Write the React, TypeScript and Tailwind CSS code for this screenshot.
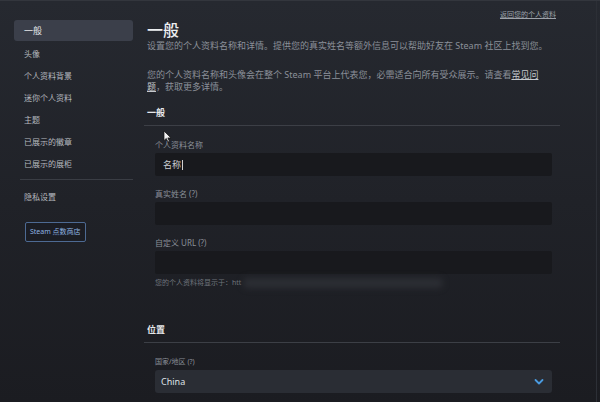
import React from 'react';

const font = { fontFamily: '"Noto Sans", "Noto Sans CJK SC", sans-serif' };

const navItems = ['头像', '个人资料背景', '迷你个人资料', '主题', '已展示的徽章', '已展示的展柜'];

function Field({ label, value, cursor }: { label: string; value?: string; cursor?: boolean }) {
  return (
    <div className="flex flex-col">
      <div className="text-[8px] text-[#8a8f98] h-[12px] leading-[12px] mb-[2px]">{label}</div>
      <div className="h-[23px] bg-[#18191d] rounded-[2px] flex items-center px-[8px] text-[9px] text-[#c9ccd1]">
        {value}
        {cursor && <span className="w-px h-[10px] bg-[#d0d0d0] ml-px" />}
      </div>
    </div>
  );
}

export default function App() {
  return (
    <div
      className="w-[600px] h-[402px] overflow-hidden relative flex bg-gradient-to-b from-[#262930] via-[#202228] to-[#1b1c21] border-t border-[#33363d]"
      style={font}
    >
      {/* sidebar */}
      <div className="w-[147px] shrink-0 pt-[19px] pl-[14px] pr-[14px] flex flex-col">
        <div className="h-[21px] rounded-[3px] bg-[#3b3f4a] flex items-center pl-[10px] text-[9px] text-[#e6e8eb]">一般</div>
        <div className="flex flex-col mt-[2px]">
          {navItems.map((t) => (
            <div key={t} className="h-[22px] flex items-center pl-[10px] text-[8px] text-[#b5b9bf]">{t}</div>
          ))}
        </div>
        <div className="h-px bg-[#3a3d44] mt-[4px] ml-[6px]" />
        <div className="h-[22px] flex items-center pl-[10px] mt-[6px] text-[8px] text-[#b5b9bf]">隐私设置</div>
        <div className="mt-[8px] ml-[11px]">
          <div className="inline-flex items-center h-[20px] px-[4px] border border-[#4d6a93] rounded-[2px] text-[7px] text-[#8fb3e0] bg-[#1b1d24]">
            Steam 点数商店
          </div>
        </div>
      </div>

      {/* main */}
      <div className="flex-1 pr-[40px] flex flex-col relative">
        <div className="absolute right-[44px] top-[9px] text-[7px] text-[#9da2a9] underline">返回您的个人资料</div>
        <div className="pt-[18px] text-[16px] leading-[22px] text-[#eceef0] font-medium">一般</div>
        <div className="text-[9px] leading-[12px] text-[#8b9099] mt-[-1px] whitespace-nowrap">
          设置您的个人资料名称和详情。提供您的真实姓名等额外信息可以帮助好友在 Steam 社区上找到您。
        </div>
        <div className="text-[9px] leading-[12px] text-[#8b9099] mt-[17px] w-[400px]">
          您的个人资料名称和头像会在整个 Steam 平台上代表您，必需适合向所有受众展示。请查看<span className="underline text-[#c5c8cc]">常见问题</span>，获取更多详情。
        </div>

        <div className="mt-[13px] text-[9px] font-bold text-[#e6e8eb] h-[14px] leading-[14px]">一般</div>
        <div className="h-px bg-[#3c3f46] mt-[5px] ml-[-3px]" />
        <div className="px-[8px] pt-[13px] flex flex-col gap-[12px]">
          <Field label="个人资料名称" value="名称" cursor />
          <Field label="真实姓名 (?)" />
          <div className="flex flex-col">
            <Field label="自定义 URL (?)" />
            <div className="mt-[3px] h-[12px] flex items-center text-[7px] text-[#6f747c]">
              您的个人资料将显示于：htt
              <span className="ml-[2px] w-[200px] h-[10px] rounded-full bg-[#2c2e34] blur-[3px]" />
            </div>
          </div>
        </div>

        <div className="mt-[34px] text-[9px] font-bold text-[#e6e8eb] h-[14px] leading-[14px]">位置</div>
        <div className="h-px bg-[#3c3f46] mt-[5px] ml-[-3px]" />
        <div className="px-[8px] pt-[13px] flex flex-col">
          <div className="text-[7px] text-[#8a8f98] h-[12px] leading-[12px] mb-[2px]">国家/地区 (?)</div>
          <div className="h-[23px] bg-[#2a2d34] rounded-[3px] flex items-center justify-between px-[6px] text-[9px] text-[#dfe2e6]">
            China
            <svg width="10" height="8" viewBox="0 0 10 8" className="mr-[2px]">
              <path d="M1.5 2 L5 5.5 L8.5 2" fill="none" stroke="#4a9be0" strokeWidth="1.8" strokeLinecap="round" strokeLinejoin="round" />
            </svg>
          </div>
        </div>

        {/* mouse pointer */}
        <svg className="absolute left-[16px] top-[129px]" width="9" height="13" viewBox="0 0 9 13">
          <path d="M1 1 L1 10.5 L3.3 8.4 L5 12 L6.4 11.3 L4.8 7.9 L8 7.9 Z" fill="#f2f2f2" stroke="#111" strokeWidth="0.7" />
        </svg>
      </div>
      <div className="absolute right-[3px] top-0 bottom-0 w-px bg-[#2c2f36]" />
    </div>
  );
}
